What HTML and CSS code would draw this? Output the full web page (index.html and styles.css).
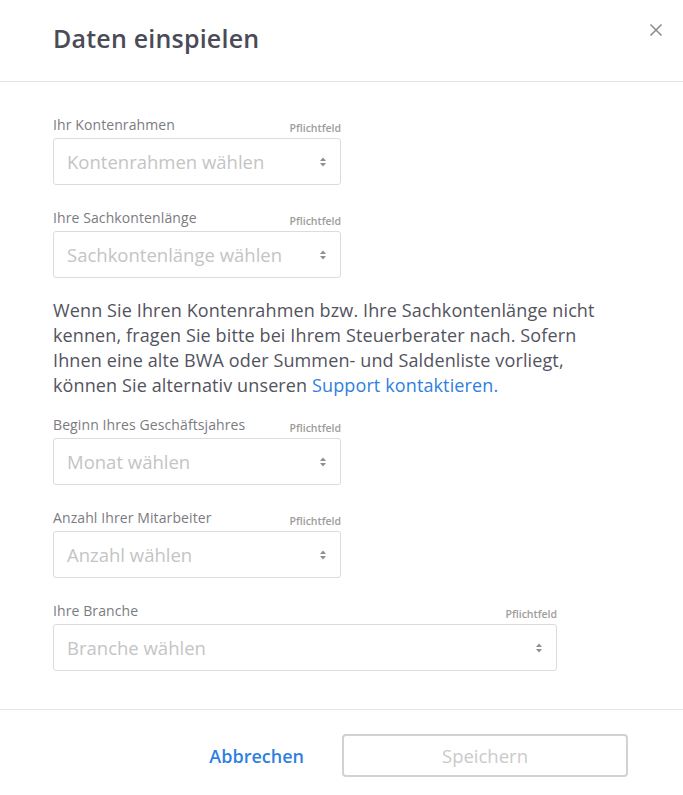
FILE: index.html
```html
<!DOCTYPE html>
<html lang="de">
<head>
  <meta charset="UTF-8" />
  <meta name="viewport" content="width=device-width, initial-scale=1" />
  <title>Daten einspielen</title>
  <link rel="stylesheet" href="styles.css">
</head>
<body>
  <div class="modal">
    <div class="modal-header">
      <h1>Daten einspielen</h1>
      <button class="close" aria-label="Schließen">
        <svg width="14" height="14" viewBox="0 0 14 14"><path d="M1.5 1.5l11 11M12.5 1.5l-11 11" stroke="#8d8d8d" stroke-width="1.6" fill="none"/></svg>
      </button>
    </div>

    <div class="modal-body">
      <div class="field">
        <div class="field-head">
          <label>Ihr Kontenrahmen</label>
          <span class="required">Pflichtfeld</span>
        </div>
        <div class="select">
          <span class="placeholder">Kontenrahmen wählen</span>
          <svg class="arrows" width="8" height="12" viewBox="0 0 8 12"><path d="M4 1.5l3 3.5H1z M4 10.5l3-3.5H1z" fill="#8f8f8f"/></svg>
        </div>
      </div>

      <div class="field">
        <div class="field-head">
          <label>Ihre Sachkontenlänge</label>
          <span class="required">Pflichtfeld</span>
        </div>
        <div class="select">
          <span class="placeholder">Sachkontenlänge wählen</span>
          <svg class="arrows" width="8" height="12" viewBox="0 0 8 12"><path d="M4 1.5l3 3.5H1z M4 10.5l3-3.5H1z" fill="#8f8f8f"/></svg>
        </div>
      </div>

      <p class="note">Wenn Sie Ihren Kontenrahmen bzw. Ihre Sachkontenlänge nicht kennen, fragen Sie bitte bei Ihrem Steuerberater nach. Sofern Ihnen eine alte BWA oder Summen- und Saldenliste vorliegt, können Sie alternativ unseren <a href="#">Support kontaktieren.</a></p>

      <div class="field">
        <div class="field-head">
          <label>Beginn Ihres Geschäftsjahres</label>
          <span class="required">Pflichtfeld</span>
        </div>
        <div class="select">
          <span class="placeholder">Monat wählen</span>
          <svg class="arrows" width="8" height="12" viewBox="0 0 8 12"><path d="M4 1.5l3 3.5H1z M4 10.5l3-3.5H1z" fill="#8f8f8f"/></svg>
        </div>
      </div>

      <div class="field">
        <div class="field-head">
          <label>Anzahl Ihrer Mitarbeiter</label>
          <span class="required">Pflichtfeld</span>
        </div>
        <div class="select">
          <span class="placeholder">Anzahl wählen</span>
          <svg class="arrows" width="8" height="12" viewBox="0 0 8 12"><path d="M4 1.5l3 3.5H1z M4 10.5l3-3.5H1z" fill="#8f8f8f"/></svg>
        </div>
      </div>

      <div class="field field-wide">
        <div class="field-head">
          <label>Ihre Branche</label>
          <span class="required">Pflichtfeld</span>
        </div>
        <div class="select">
          <span class="placeholder">Branche wählen</span>
          <svg class="arrows" width="8" height="12" viewBox="0 0 8 12"><path d="M4 1.5l3 3.5H1z M4 10.5l3-3.5H1z" fill="#8f8f8f"/></svg>
        </div>
      </div>
    </div>

    <div class="modal-footer">
      <a href="#" class="cancel">Abbrechen</a>
      <button class="save" disabled>Speichern</button>
    </div>
  </div>
</body>
</html>
```

FILE: styles.css
```css
* {
  box-sizing: border-box;
}
body {
  margin: 0;
  background: #fff;
  font-family: 'Open Sans', 'Noto Sans', sans-serif;
  color: #4f4f5a;
}
.modal {
  width: 683px;
  min-height: 795px;
  background: #fff;
}
.modal-header {
  position: relative;
  height: 82px;
  padding: 22px 53px 0;
  border-bottom: 1px solid #e2e5ec;
}
h1 {
  margin: 0;
  font-size: 25px;
  line-height: 32px;
  font-weight: 600;
  letter-spacing: 0.2px;
  color: #4a4b57;
}
.close {
  position: absolute;
  top: 23px;
  right: 20px;
  padding: 0;
  border: none;
  background: none;
  cursor: pointer;
}
.close svg {
  display: block;
}
.modal-body {
  padding: 34px 53px 38px;
}
.field {
  width: 288px;
}
.field + .field {
  margin-top: 24px;
}
.field-wide {
  width: 504px;
}
.field-head {
  display: flex;
  justify-content: space-between;
  align-items: baseline;
  height: 18px;
  margin-bottom: 4px;
}
label {
  font-size: 14px;
  line-height: 18px;
  letter-spacing: 0.1px;
  color: #7b7b7f;
}
.required {
  font-size: 10.5px;
  font-weight: 600;
  color: #9c9c9c;
  transform: translateY(2px);
}
.select {
  display: flex;
  align-items: center;
  justify-content: space-between;
  height: 47px;
  padding: 0 13px;
  border: 1px solid #dcdcdc;
  border-radius: 3px;
}
.placeholder {
  font-size: 18.5px;
  color: #c4c4c4;
}
.arrows {
  display: block;
}
.note {
  margin: 20px 0 18px;
  width: 560px;
  font-size: 18px;
  line-height: 25px;
  letter-spacing: 0.12px;
  color: #53535e;
}
.note a {
  color: #2f7fe0;
  text-decoration: none;
}
.modal-footer {
  display: flex;
  justify-content: flex-end;
  align-items: center;
  gap: 38px;
  padding: 24px 55px 18px;
  border-top: 1px solid #e2e5ec;
}
.cancel {
  font-size: 18px;
  font-weight: 600;
  color: #2f7fe0;
  text-decoration: none;
}
.save {
  width: 286px;
  height: 43px;
  border: 2px solid #d2d2d2;
  border-radius: 4px;
  background: #fff;
  font-family: inherit;
  font-size: 18.5px;
  color: #cacaca;
}
```
